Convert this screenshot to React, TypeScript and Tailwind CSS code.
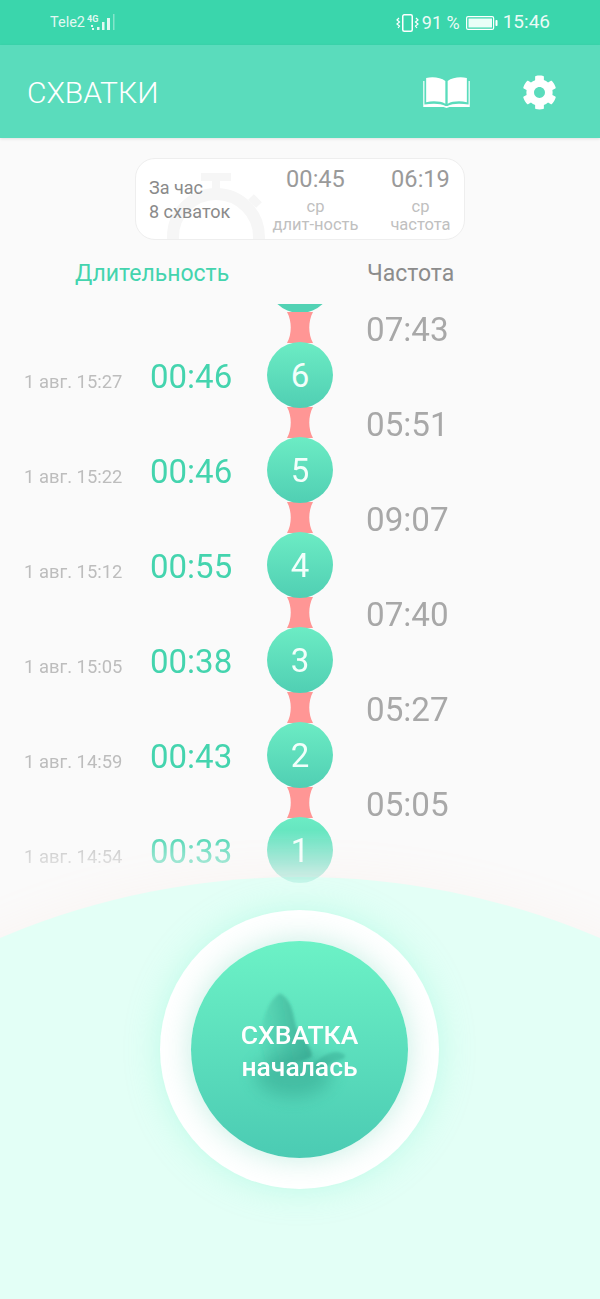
import React from "react";
import { FaCog } from "react-icons/fa";

const rows = [
  { n: 6, date: "1 авг. 15:27", dur: "00:46" },
  { n: 5, date: "1 авг. 15:22", dur: "00:46" },
  { n: 4, date: "1 авг. 15:12", dur: "00:55" },
  { n: 3, date: "1 авг. 15:05", dur: "00:38" },
  { n: 2, date: "1 авг. 14:59", dur: "00:43" },
  { n: 1, date: "1 авг. 14:54", dur: "00:33" },
];

const freqs = ["07:43", "05:51", "09:07", "07:40", "05:27", "05:05"];

const Connector = () => (
  <svg width="26" height="31" viewBox="0 0 26 31" className="-my-px mx-auto block shrink-0">
    <path d="M0 0H26C21 9 21 22 26 31H0C5 22 5 9 0 0Z" fill="#ff9695" />
  </svg>
);

const Circle = ({ n }: { n?: number }) => (
  <div className="relative flex h-[66px] w-[66px] shrink-0 items-center justify-center rounded-full bg-linear-to-b from-[#6cecc4] to-[#50cfb3] text-[33px] leading-none text-[#f2fffb]">
    {n}
  </div>
);

const StatusBar = () => (
  <div className="flex h-[45px] items-center justify-between bg-[#3ad6ac] pl-[50px] pr-[50px] text-white">
    <div className="flex items-center text-[14.5px] opacity-85">
      <span>Tele2</span>
      <svg width="30" height="20" viewBox="0 0 30 20" className="ml-[2px]" fill="#fff">
        <text x="0" y="9" fontSize="9" fontWeight="700" fill="#fff">4G</text>
        <rect x="4" y="12" width="2" height="2" />
        <rect x="5" y="15" width="2" height="2" />
        <rect x="10" y="14" width="2.5" height="3" />
        <rect x="15" y="9" width="2.5" height="8" />
        <rect x="20" y="5" width="3" height="12" />
        <rect x="26" y="1" width="1.5" height="16" opacity="0.45" />
      </svg>
    </div>
    <div className="flex items-center text-[18px]">
      <svg width="23" height="20" viewBox="0 0 23 20" fill="none" stroke="#fff" className="mr-[3px]">
        <rect x="6.75" y="1.75" width="9.5" height="16.5" rx="1.5" strokeWidth="1.5" />
        <path d="M3 5L1 7l2.5 2-2.5 2 2.5 2-1.5 2M20 5l2 2-2.5 2 2.5 2-2.5 2 1.5 2" strokeWidth="1.2" />
      </svg>
      <span className="opacity-90">91 %</span>
      <svg width="32" height="14" viewBox="0 0 32 14" className="ml-[6px] mr-[5px]" fill="none">
        <rect x="0.6" y="0.6" width="27" height="12.8" rx="1.5" stroke="#fff" strokeWidth="1.2" />
        <rect x="2.5" y="2.5" width="23.5" height="9" fill="#eafff8" />
        <rect x="29.5" y="4" width="2" height="6" rx="0.8" fill="#fff" />
      </svg>
      <span className="text-[19px] opacity-90">15:46</span>
    </div>
  </div>
);

const Header = () => (
  <div className="relative flex h-[93px] items-center justify-between bg-[#5adcbc] pl-[27px] pr-[43px] pt-[2px] shadow-[0_1px_3px_rgba(0,0,0,0.1)]">
    <h1 className="text-[30px] font-light text-white">СХВАТКИ</h1>
    <div className="flex items-center gap-[52px]">
      <svg width="47" height="31" viewBox="0 0 48 32" fill="#fff">
        <path d="M3 1C10 -0.5 18 0.5 22.8 4V27.5C18 25 10 24.5 3 26Z" />
        <path d="M45 1C38 -0.5 30 0.5 25.2 4V27.5C30 25 38 24.5 45 26Z" />
        <path d="M0 4H1.2V28.5C9 27 18 27 23 30H25C30 27 39 27 46.8 28.5V4H48V31H27L24 32L21 31H0Z" />
      </svg>
      <FaCog className="text-white" size={35} />
    </div>
  </div>
);

const StatCard = () => (
  <div className="relative mx-auto mt-[20px] flex h-[82px] w-[330px] overflow-hidden rounded-[20px] border border-[#eeeeee] bg-white">
    <svg width="120" height="82" viewBox="0 0 120 82" fill="none" stroke="#f6f6f6" className="absolute left-[20px] top-0">
      <circle cx="60" cy="78" r="43" strokeWidth="12" />
      <path d="M45 18H75M60 18V36M95 38L103 46" strokeWidth="8" />
    </svg>
    <div className="relative flex w-[130px] flex-col justify-center pl-[13px] pt-[2px] text-[18px] leading-[24.5px] text-[#8a8a8a]">
      <span>За час</span>
      <span>8 схваток</span>
    </div>
    <div className="relative flex w-[99px] flex-col items-center pt-[6px] text-[#c0c0c0]">
      <span className="text-[23.6px] leading-[28px] text-[#9a9a9a]">00:45</span>
      <span className="mt-[4px] text-[16.5px] leading-[19px]">ср</span>
      <span className="text-[16.5px] leading-[18px]">длит-ность</span>
    </div>
    <div className="relative flex flex-1 flex-col items-center pl-[12px] pt-[6px] text-[#c0c0c0]">
      <span className="text-[23.6px] leading-[28px] text-[#9a9a9a]">06:19</span>
      <span className="mt-[4px] text-[16.5px] leading-[19px]">ср</span>
      <span className="text-[16.5px] leading-[18px]">частота</span>
    </div>
  </div>
);

const Timeline = () => (
  <div className="relative flex h-[582px] pl-[24px] [mask-image:linear-gradient(to_bottom,#000_526px,rgba(0,0,0,0.15)_581px)]">
    <div className="flex w-[309px] flex-col">
      <div className="ml-[243px] flex h-[9px] w-[66px] items-end overflow-hidden">
        <div className="shrink-0">
          <div className="h-[66px] w-[66px] rounded-full bg-[#52d2b4]" />
        </div>
      </div>
      {rows.map((r) => (
        <div key={r.n} className="flex h-[95px] items-end">
          <div className="flex h-[66px] w-[126px] items-center pt-[13px] text-[18.4px] text-[#bdbdbd]">{r.date}</div>
          <div className="flex h-[66px] w-[117px] items-center pt-[4px] text-[33px] text-[#44d4ae]">{r.dur}</div>
          <div className="flex w-[66px] flex-col">
            <Connector />
            <Circle n={r.n} />
          </div>
        </div>
      ))}
    </div>
    <div className="ml-[33px] flex flex-col">
      {freqs.map((f) => (
        <div key={f} className="h-[95px] text-[33.2px] leading-[52px] text-[#a8a8a8]">{f}</div>
      ))}
    </div>
  </div>
);

const StartButton = () => (
  <div className="absolute left-0 top-[910px] flex w-full justify-center pr-[1px]">
    <div className="flex h-[279px] w-[279px] items-center justify-center rounded-full bg-white shadow-[0_0_34px_rgba(120,240,205,0.35)]">
      <div className="relative flex h-[217px] w-[217px] flex-col items-center justify-center rounded-full bg-linear-to-b from-[#6cf2c6] to-[#4bcbb3] pt-[2px] text-white shadow-[0_0_30px_rgba(110,215,185,0.4)]">
        <svg width="140" height="130" viewBox="0 0 420 390" className="absolute left-[39px] top-[44px] overflow-visible">
          <defs>
            <filter id="blobBlur" x="-50%" y="-50%" width="200%" height="200%">
              <feGaussianBlur stdDeviation="26" />
            </filter>
            <filter id="blobSoft" x="-20%" y="-20%" width="140%" height="140%">
              <feGaussianBlur stdDeviation="5" />
            </filter>
            <linearGradient id="headFade" gradientUnits="userSpaceOnUse" x1="230" y1="120" x2="70" y2="150">
              <stop offset="0" stopColor="#2c9783" stopOpacity="0.6" />
              <stop offset="1" stopColor="#2c9783" stopOpacity="0" />
            </linearGradient>
          </defs>
          <ellipse cx="190" cy="270" rx="115" ry="65" fill="#2c9783" opacity="0.42" filter="url(#blobBlur)" />
          <path
            d="M150 25C120 40 100 90 90 150C80 200 100 240 140 240C180 240 230 225 245 215C250 190 215 160 200 130C190 100 190 45 150 25Z"
            fill="url(#headFade)"
            filter="url(#blobSoft)"
          />
          <path
            d="M250 240C280 205 320 190 345 210C350 225 320 225 295 240C280 260 260 260 250 240Z"
            fill="#2c9783"
            opacity="0.35"
            filter="url(#blobSoft)"
          />
        </svg>
        <span className="relative text-[26.5px] font-medium leading-[32px]">СХВАТКА</span>
        <span className="relative text-[26.5px] font-medium leading-[32px]">началась</span>
      </div>
    </div>
  </div>
);

const App = () => {
  return (
    <div className="relative h-[1299px] w-[600px] overflow-hidden bg-[#fafafa] font-['Roboto',sans-serif]">
      <div className="absolute left-[-468px] top-[877px] h-[1536px] w-[1536px] rounded-full bg-[#e3fff6] shadow-[0_-6px_40px_rgba(255,190,170,0.08)]" />
      <StatusBar />
      <Header />
      <StatCard />
      <div className="flex h-[64px] items-center pt-[4px] text-[23px]">
        <span className="ml-[75px] w-[292px] text-[#44d4ae]">Длительность</span>
        <span className="text-[#8c8c8c]">Частота</span>
      </div>
      <Timeline />
      <StartButton />
    </div>
  );
};

export default App;
